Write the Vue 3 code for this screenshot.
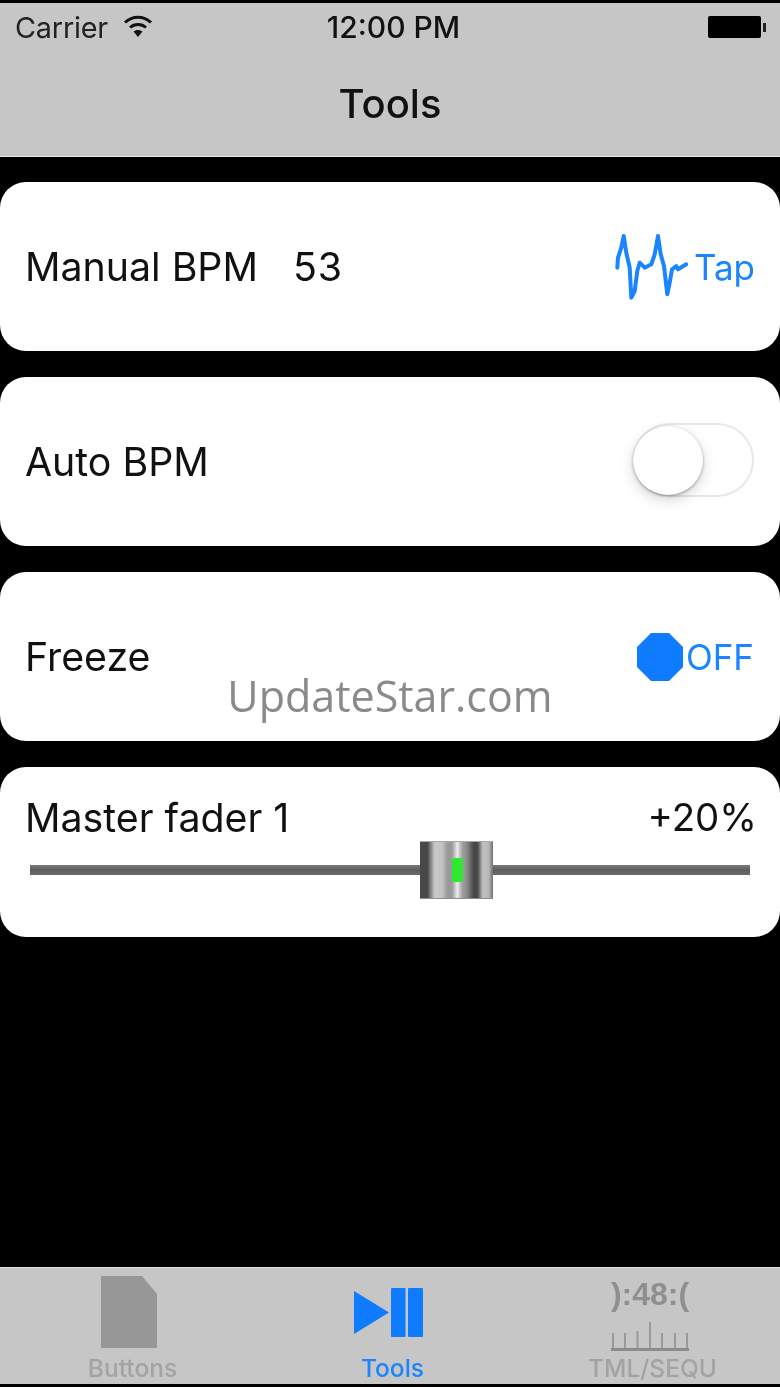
<template>
  <div class="screen">
    <header class="nav">
      <div class="status">
        <div class="status-left">
          <span class="carrier">Carrier</span>
          <svg class="wifi" width="30" height="24" viewBox="0 0 30 24">
            <path d="M2 7.5C9.5 0.5 20.5 0.5 28 7.5" fill="none" stroke="#111" stroke-width="3" />
            <path d="M7 12.5C11.5 8.5 18.5 8.5 23 12.5" fill="none" stroke="#111" stroke-width="3" />
            <path d="M10.5 16.5C13 14.4 17 14.4 19.5 16.5L15 22Z" fill="#111" />
          </svg>
        </div>
        <span class="clock">12:00 PM</span>
        <div class="battery">
          <span class="battery-body"></span>
          <span class="battery-tip"></span>
        </div>
      </div>
      <h1 class="title">Tools</h1>
    </header>

    <main class="cards">
      <section class="card">
        <div class="bpm-label">
          <span>Manual BPM</span>
          <span class="bpm-value">{{ bpm }}</span>
        </div>
        <button class="tap">
          <svg width="73" height="66" viewBox="0 0 73 66">
            <path
              d="M2.3 33.7L3 23.7L6.3 13.7L8.7 2L11.3 18.7L14.7 33.7L16.3 63.7L19.7 57L22.3 37L24.7 28.7L29.7 33.7L36.3 30.3L39.7 20.3L43 2L45.7 20.3L49 32L52.3 60.3L54.7 48.7L57 35.3L61.3 32L63 35.3L71.3 30.3"
              fill="none"
              stroke="#1b84ff"
              stroke-width="4"
              stroke-linejoin="round"
              stroke-linecap="round"
            />
          </svg>
          <span>Tap</span>
        </button>
      </section>

      <section class="card">
        <span>Auto BPM</span>
        <div class="switch">
          <span class="knob"></span>
        </div>
      </section>

      <section class="card">
        <span>Freeze</span>
        <div class="freeze">
          <svg width="48" height="50" viewBox="0 0 48 50">
            <polygon points="15,1 33,1 47,15 47,35 33,49 15,49 1,35 1,15" fill="#0f7bff" />
          </svg>
          <span>OFF</span>
        </div>
      </section>

      <section class="card fader-card">
        <div class="fader-top">
          <span>Master fader 1</span>
          <span class="fader-value">+20%</span>
        </div>
        <div class="fader">
          <span class="rail rail-left"></span>
          <div class="thumb"><span class="led"></span></div>
          <span class="rail rail-right"></span>
        </div>
      </section>
    </main>

    <div class="watermark">UpdateStar.com</div>

    <nav class="tabs">
      <div class="tab">
        <svg class="tab-icon doc" width="56" height="72" viewBox="0 0 56 72">
          <path d="M0 0H41L56 18V72H0Z" fill="#979797" />
        </svg>
        <span>Buttons</span>
      </div>
      <div class="tab active">
        <svg class="tab-icon play" width="70" height="72" viewBox="0 0 70 72">
          <path d="M0 15L35 36.5L0 58Z" fill="#0f7bff" />
          <rect x="37" y="12" width="14.5" height="49" rx="1" fill="#0f7bff" />
          <rect x="54" y="12" width="15" height="49" rx="1" fill="#0f7bff" />
        </svg>
        <span>Tools</span>
      </div>
      <div class="tab">
        <div class="seq-icon">
          <div class="seq-time">):48:(</div>
          <svg class="ruler" width="78" height="40" viewBox="0 0 78 40">
            <path
              d="M2 37V21M14 37V21M26.500 37V19M39 37V10M51 37V21M64 37V21M76 37V21"
              stroke="#9a9a9a"
              stroke-width="2"
              fill="none"
            />
            <rect x="0" y="36" width="78" height="3" fill="#8c8c8c" />
          </svg>
        </div>
        <span>TML/SEQU</span>
      </div>
    </nav>
  </div>
</template>

<script setup>
import { ref } from 'vue';

const bpm = ref(53);
</script>

<style>
html,
body {
  margin: 0;
  background: #000;
}
</style>

<style scoped>
.screen {
  position: relative;
  width: 780px;
  height: 1387px;
  padding-top: 3px;
  box-sizing: border-box;
  display: flex;
  flex-direction: column;
  overflow: hidden;
  background: #000;
  color: #111;
  font-family: Inter, Roboto, "Liberation Sans", sans-serif;
  filter: blur(0.6px);
}

.nav {
  height: 154px;
  box-sizing: border-box;
  background: #c6c6c6;
  border-bottom: 1px solid #e4e4e4;
}

.status {
  height: 48px;
  display: grid;
  grid-template-columns: 1fr auto 1fr;
  align-items: center;
  padding: 0 14px 0 15px;
}

.status-left {
  display: flex;
  align-items: center;
  gap: 15px;
}

.carrier {
  color: #222;
  font-size: 28.800px;
  letter-spacing: -0.2px;
}

.clock {
  margin-left: 6px;
  font-size: 30px;
  font-weight: 500;
}

.wifi {
  margin-top: -1px;
}

.battery {
  justify-self: end;
  display: flex;
  align-items: center;
}

.battery-body {
  width: 53px;
  height: 22px;
  background: #000;
  border-radius: 2px;
}

.battery-tip {
  width: 3px;
  height: 9px;
  margin-left: 2px;
  background: #222;
}

.title {
  margin: 20px 0 0;
  text-align: center;
  font-size: 40px;
  font-weight: 500;
  line-height: 66px;
}

.cards {
  display: flex;
  flex-direction: column;
  gap: 26px;
  padding-top: 25px;
}

.card {
  height: 169px;
  padding: 0 26px 0 25px;
  box-sizing: border-box;
  display: flex;
  align-items: center;
  justify-content: space-between;
  background: #fff;
  border-radius: 26px;
  font-size: 39.300px;
}

.bpm-label {
  display: flex;
  gap: 35px;
}

.bpm-value {
  letter-spacing: 1px;
}

.tap {
  display: flex;
  align-items: center;
  gap: 6px;
  margin-right: -1px;
  padding: 0;
  border: none;
  background: none;
  color: #1b84ff;
  font: inherit;
  font-size: 35px;
}

.switch {
  position: relative;
  width: 121px;
  height: 74px;
  margin-top: -3px;
  box-sizing: border-box;
  border: 2px solid #e8e8e8;
  border-radius: 37px;
}

.knob {
  position: absolute;
  left: -2px;
  top: 1px;
  width: 70px;
  height: 69px;
  background: #fff;
  border-radius: 50%;
  box-shadow: 0 5px 14px rgba(0, 0, 0, 0.16), 0 1px 3px rgba(0, 0, 0, 0.35);
}

.freeze {
  display: flex;
  align-items: center;
  gap: 2px;
  color: #1b84ff;
  font-size: 35px;
}

.fader-card {
  height: 170px;
  flex-direction: column;
  align-items: stretch;
  justify-content: flex-start;
  padding-top: 27px;
}

.fader-top {
  display: flex;
  justify-content: space-between;
}

.fader-value {
  margin-right: -3px;
  font-size: 38.400px;
}

.fader {
  display: flex;
  align-items: center;
  height: 58px;
  margin: 0 3px 0 5px;
}

.rail {
  height: 10px;
  background: linear-gradient(#7a7a7a, #5e5e5e 50%, #6a6a6a);
}

.rail-left {
  width: 390px;
}

.rail-right {
  width: 257px;
}

.thumb {
  position: relative;
  width: 73px;
  height: 58px;
  border-top: 1px solid #a8a8a8;
  border-bottom: 1px solid #8e8e8e;
  box-sizing: border-box;
  background: linear-gradient(
    90deg,
    #4a4a4a 0,
    #464646 10%,
    #c8c8c8 20%,
    #c4c4c4 30%,
    #989898 38%,
    #9a9a9a 44%,
    #ececec 51%,
    #a0a0a0 58%,
    #8c8c8c 64%,
    #444 74%,
    #4a4a4a 79%,
    #c0c0c0 86%,
    #b8b8b8 94%,
    #707070 100%
  );
}

.led {
  position: absolute;
  left: 32px;
  top: 16px;
  width: 11px;
  height: 24px;
  background: #2ee82e;
  border-radius: 2px;
}

.watermark {
  position: absolute;
  left: 0;
  right: 0;
  top: 670px;
  text-align: center;
  color: #8a8a8a;
  font-family: "Open Sans", sans-serif;
  font-size: 43px;
  line-height: 52px;
}

.tabs {
  position: absolute;
  left: 0;
  right: 0;
  bottom: 3px;
  height: 117px;
  box-sizing: border-box;
  display: grid;
  grid-template-columns: repeat(3, 1fr);
  background: #c6c6c6;
  border-top: 1px solid #e0e0e0;
}

.tab {
  display: flex;
  flex-direction: column;
  align-items: center;
  padding-top: 8px;
  color: #a3a3a3;
  font-size: 24.500px;
  font-weight: 500;
  line-height: 28px;
}

.tab > span {
  margin: 6px 0 0 5px;
}

.tab-icon {
  display: block;
}

.doc {
  margin-right: 2px;
}

.play {
  margin-right: 2px;
}

.active {
  color: #1b84ff;
}

.seq-icon {
  height: 72px;
  display: flex;
  flex-direction: column;
  align-items: center;
}

.seq-time {
  flex: none;
  height: 36px;
  color: #8f8f8f;
  font-family: "Liberation Sans", sans-serif;
  font-size: 32px;
  font-weight: 700;
  line-height: 36px;
}

.ruler {
  flex: none;
}
</style>
